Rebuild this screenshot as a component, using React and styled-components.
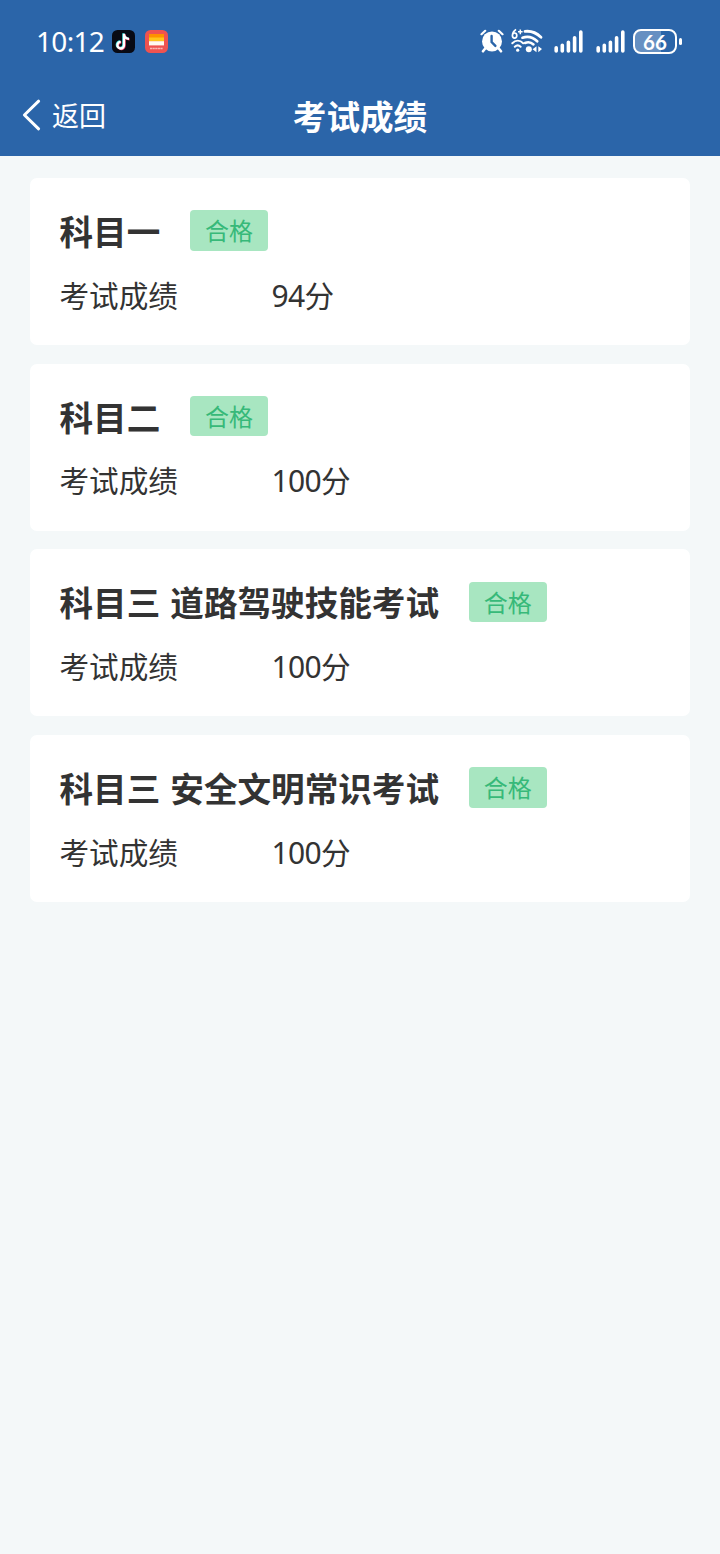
import React from "react";
import styled, { createGlobalStyle } from "styled-components";

const subjects = [
  { title: "科目一", score: 94 },
  { title: "科目二", score: 100 },
  { title: "科目三 道路驾驶技能考试", score: 100 },
  { title: "科目三 安全文明常识考试", score: 100 },
];

const MusicIcon = () => (
  <svg width="23" height="23" viewBox="0 0 23 23" fill="none">
    <rect width="23" height="23" rx="5.5" fill="#080a14" />
    <g strokeWidth="2.3">
      <path d="M11.4 3.3v11.5a3.3 3.3 0 1 1-3.3-3.4M11.4 3.8c.4 2.6 2.2 4.3 5 4.5" stroke="#35dfe0" />
      <path d="M12.6 4.3v11.5a3.3 3.3 0 1 1-3.3-3.4M12.6 4.8c.4 2.6 2.2 4.3 5 4.5" stroke="#f0385f" />
      <path d="M12 3.8v11.5a3.3 3.3 0 1 1-3.3-3.4M12 4.3c.4 2.6 2.2 4.3 5 4.5" stroke="#fff" />
    </g>
  </svg>
);

const NewsIcon = () => (
  <svg width="23" height="23" viewBox="0 0 23 23">
    <rect width="23" height="23" rx="5.5" fill="#ef5350" />
    <path d="M4 4h15v4H4z" fill="#ff9100" />
    <path d="M4 7.5h15v4H4z" fill="#ffc51b" />
    <path d="M4 11.2h15v4.2H4z" fill="#fffaf0" />
    <path d="M5 18.5h13" stroke="#f9b9b3" strokeWidth="1.7" strokeDasharray="2.2 .4" />
  </svg>
);

const AlarmIcon = () => (
  <svg width="24" height="24" viewBox="0 0 24 24" fill="none">
    <circle cx="12" cy="12.4" r="10" fill="#fff" />
    <path d="M1.5 5.2 5.2 1.8M22.5 5.2 18.8 1.8" stroke="#fff" strokeWidth="2.2" strokeLinecap="round" />
    <path d="m5.2 19.5-2.2 2.8M18.8 19.5l2.2 2.8" stroke="#fff" strokeWidth="2.6" strokeLinecap="round" />
    <path d="M11.6 7v6l3.8 3.9" stroke="#2b65a9" strokeWidth="2.4" strokeLinecap="round" />
  </svg>
);

const WifiIcon = () => (
  <svg width="32" height="26" viewBox="0 0 32 26" fill="none" stroke="#fff">
    <path d="M5 1.4C3 2.8 1.4 5 1.4 7.6a2.2 2.6 0 1 0 4.4 0 2.2 2.6 0 1 0-4.4 0" strokeWidth="1.7" />
    <path d="M7 3.8h4.6M9.3 1.4v4.8" strokeWidth="1.5" />
    <path d="M14 3.4c6-.8 11.5 1.5 16 5.8" strokeWidth="2.8" strokeLinecap="round" />
    <path d="M11.5 9.7c5.2-1.8 10.5-.5 14.7 3.5" strokeWidth="2.7" strokeLinecap="round" />
    <path d="M14 15c3-1.3 6.2-.7 8.5 1.5" strokeWidth="2.5" strokeLinecap="round" />
    <path d="M1.3 15.2c3.3-3.2 7.6-3.2 10.9 0M3.8 18.7c1.8-1.7 4-1.7 5.8 0" strokeWidth="2" strokeLinecap="round" />
    <circle cx="6.7" cy="22.2" r="1.6" fill="#fff" stroke="none" />
    <circle cx="17.8" cy="21.2" r="3" fill="#fff" stroke="none" />
    <path d="m21.6 21.2 3.9-3v6zM31 20.9l-3.7 3.3v-6z" fill="#fff" stroke="none" />
  </svg>
);

const SignalIcon = () => (
  <svg width="29" height="23" viewBox="0 0 29 23" stroke="#fff" strokeWidth="3.6" strokeLinecap="round">
    <path d="M2.2 17.8V21M8.3 15.2V21M14.4 12.2V21M20.6 7.7V21M26.8 2v19" />
  </svg>
);

const BackIcon = () => (
  <svg width="20" height="32" viewBox="0 0 20 32" fill="none">
    <path d="M16.6 2.2 2.4 16l14.2 13.8" stroke="#fff" strokeWidth="3" strokeLinecap="round" strokeLinejoin="round" />
  </svg>
);

const App = () => {
  return (
    <Page>
      <GlobalStyle />
      <Header>
        <StatusBar>
          <Notices>
            <Time>10:12</Time>
            <MusicIcon />
            <NewsIcon />
          </Notices>
          <Indicators>
            <AlarmIcon />
            <WifiIcon />
            <Signals>
              <SignalIcon />
              <SignalIcon />
            </Signals>
            <Battery>
              <BatteryBody>66</BatteryBody>
              <BatteryTip />
            </Battery>
          </Indicators>
        </StatusBar>
        <NavBar>
          <BackBtn>
            <BackIcon />
            返回
          </BackBtn>
          <NavTitle>考试成绩</NavTitle>
        </NavBar>
      </Header>
      <List>
        {subjects.map((subject) => (
          <Card key={subject.title}>
            <CardHead>
              <Title>{subject.title}</Title>
              <Badge>合格</Badge>
            </CardHead>
            <ScoreRow>
              <Label>考试成绩</Label>
              <Score>
                <Digits>{subject.score}</Digits>分
              </Score>
            </ScoreRow>
          </Card>
        ))}
      </List>
    </Page>
  );
};

const GlobalStyle = createGlobalStyle`
  * {
    box-sizing: border-box;
  }
  body {
    margin: 0;
    background: #f4f8f9;
    font-family: "Noto Sans CJK SC", sans-serif;
  }
  svg {
    display: block;
    flex-shrink: 0;
  }
`;
const Page = styled.div`
  min-height: 1554px;
  background: #f4f8f9;
  color: #333333;
`;
const Header = styled.header`
  height: 156px;
  background: #2b65a9;
  color: #ffffff;
`;
const StatusBar = styled.div`
  height: 76px;
  padding: 6px 38px 0 36px;
  display: flex;
  align-items: center;
  justify-content: space-between;
`;
const Notices = styled.div`
  display: flex;
  align-items: center;
  gap: 10px;
`;
const Time = styled.div`
  width: 66px;
  font-family: "Noto Sans", sans-serif;
  font-size: 28px;
  line-height: 32px;
  letter-spacing: -0.7px;
  white-space: nowrap;
`;
const Indicators = styled.div`
  display: flex;
  align-items: center;
  gap: 7px;
`;
const Signals = styled.div`
  display: flex;
  gap: 13px;
  margin: 0 1px 0 4px;
`;
const Battery = styled.div`
  display: flex;
  align-items: center;
  gap: 2px;
`;
const BatteryBody = styled.div`
  width: 44px;
  height: 25px;
  border: 2px solid #ffffff;
  border-radius: 8px;
  background: linear-gradient(90deg, #6690c2 66%, #2b65a9 66%);
  font-family: Lato, sans-serif;
  font-size: 20.5px;
  font-weight: 700;
  line-height: 22px;
  text-align: center;
`;
const BatteryTip = styled.div`
  width: 3px;
  height: 7px;
  border-radius: 2px;
  background: #ffffff;
`;
const NavBar = styled.nav`
  height: 80px;
  padding: 0 22px 2px;
  display: grid;
  grid-template-columns: 1fr auto 1fr;
  align-items: center;
`;
const BackBtn = styled.div`
  display: flex;
  align-items: center;
  gap: 10px;
  font-size: 27px;
  line-height: 32px;
`;
const NavTitle = styled.h1`
  margin: 0;
  padding-top: 2px;
  font-size: 33.6px;
  font-weight: 700;
  line-height: 40px;
`;
const List = styled.main`
  padding: 22px 30px;
  display: flex;
  flex-direction: column;
  gap: 18.7px;
`;
const Card = styled.section`
  height: 167px;
  padding: 32px 30px 0 29.5px;
  border-radius: 7px;
  background: #ffffff;
`;
const CardHead = styled.div`
  display: flex;
  align-items: center;
  gap: 29.7px;
`;
const Title = styled.h2`
  margin: 0;
  font-size: 33.6px;
  font-weight: 700;
  line-height: 41px;
  word-spacing: 2.5px;
`;
const Badge = styled.div`
  width: 78px;
  height: 40.5px;
  border-radius: 4px;
  background: #a8e6c1;
  color: #37b979;
  font-size: 24px;
  line-height: 40px;
  text-align: center;
`;
const ScoreRow = styled.div`
  display: flex;
  margin-top: 23.7px;
  font-size: 29.6px;
  line-height: 40px;
`;
const Label = styled.div`
  width: 212px;
`;
const Score = styled.div``;
const Digits = styled.span`
  font-family: "Noto Sans", sans-serif;
  font-size: 30px;
  letter-spacing: -0.7px;
`;
export default App;
